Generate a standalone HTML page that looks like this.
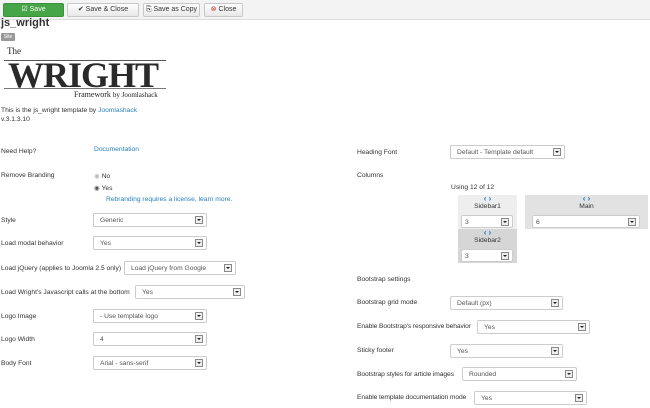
<!DOCTYPE html>
<html><head><style>
*{margin:0;padding:0;box-sizing:border-box}
body{width:650px;height:408px;background:#fff;font-family:"Liberation Sans",sans-serif;font-size:6.7px;color:#333;position:relative;overflow:hidden}
.a{position:absolute;white-space:nowrap}
.tb{position:absolute;left:0;top:0;width:650px;height:20px;background:#f3f3f3;border-bottom:1px solid #ddd}
.btn{position:absolute;top:3px;height:14px;border:1px solid #c8c8c8;border-radius:2px;background:linear-gradient(#fff,#e8e8e8);font-size:7px;line-height:12px;text-align:center;color:#333}
.sel{position:absolute;height:14px;border:1px solid #ccc;background:#fff;font-size:6.7px;line-height:13px;padding-left:6px;color:#555;border-radius:2px}
.sel i{position:absolute;right:3px;top:2px;width:8px;height:8px;border:1px solid #888;background:#eee}
.sel i:after{content:"";position:absolute;left:1px;top:2px;border-left:2px solid transparent;border-right:2px solid transparent;border-top:2px solid #222}
.lk{color:#2a7fc0}
.box{position:absolute;background:#eee}
.arr{color:#1e6fc4;font-weight:bold;font-size:8px;text-align:center;line-height:8px}
</style></head><body>
<div class="tb"></div>
<div class="btn" style="left:3px;width:61px;background:#46a546;border-color:#3d8f3d;color:#fff">☑ Save</div>
<div class="btn" style="left:67px;width:72px">✔ Save &amp; Close</div>
<div class="btn" style="left:143px;width:57px">⎘ Save as Copy</div>
<div class="btn" style="left:204px;width:39px"><span style="color:#c33">⊗</span> Close</div>
<div class="a" style="left:1px;top:17px;font-size:11px;font-weight:bold;color:#333">js_wright</div>
<div class="a" style="left:1px;top:33px;width:14px;height:8px;background:#999;color:#fff;font-size:5px;line-height:8px;text-align:center;border-radius:1px">Site</div>
<div class="a" style="left:7px;top:46px;font-family:'Liberation Serif',serif;font-size:9px;color:#222">The</div>
<div class="a" style="left:4px;top:60px;width:162px;border-top:1px solid #555"></div>
<div class="a" style="left:8px;top:59px;font-family:'Liberation Serif',serif;font-weight:bold;font-size:36px;line-height:32px;letter-spacing:-1px;color:#2a2a2a">WRIGHT</div>
<div class="a" style="left:4px;top:88px;width:162px;border-top:1px solid #777"></div>
<div class="a" style="left:74px;top:90px;font-family:'Liberation Serif',serif;font-size:8px;color:#222">Framework <span style="font-size:7px">by Joomlashack</span></div>
<div class="a" style="left:1px;top:107px">This is the js_wright template by <span class="lk">Joomlashack</span></div>
<div class="a" style="left:1px;top:116px">v.3.1.3.10</div>

<div class="a" style="left:1px;top:148px">Need Help?</div>
<div class="a lk" style="left:94px;top:146px">Documentation</div>
<div class="a" style="left:1px;top:172px">Remove Branding</div>
<div class="a" style="left:94px;top:172px"><span style="color:#bbb">◉</span> No</div>
<div class="a" style="left:94px;top:184px"><span style="color:#555">◉</span> Yes</div>
<div class="a lk" style="left:106px;top:196px">Rebranding requires a license, learn more.</div>
<div class="a" style="left:1px;top:217px">Style</div>
<div class="sel" style="left:93px;top:213px;width:114px">Generic<i></i></div>
<div class="a" style="left:1px;top:240px">Load modal behavior</div>
<div class="sel" style="left:93px;top:236px;width:114px">Yes<i></i></div>
<div class="a" style="left:1px;top:265px">Load jQuery (applies to Joomla 2.5 only)</div>
<div class="sel" style="left:124px;top:261px;width:112px">Load jQuery from Google<i></i></div>
<div class="a" style="left:1px;top:289px">Load Wright's Javascript calls at the bottom</div>
<div class="sel" style="left:135px;top:285px;width:110px">Yes<i></i></div>
<div class="a" style="left:1px;top:313px">Logo Image</div>
<div class="sel" style="left:93px;top:309px;width:114px">- Use template logo<i></i></div>
<div class="a" style="left:1px;top:336px">Logo Width</div>
<div class="sel" style="left:93px;top:332px;width:114px">4<i></i></div>
<div class="a" style="left:1px;top:360px">Body Font</div>
<div class="sel" style="left:93px;top:356px;width:114px">Arial - sans-serif<i></i></div>

<div class="a" style="left:357px;top:149px">Heading Font</div>
<div class="sel" style="left:450px;top:145px;width:115px">Default - Template default<i></i></div>
<div class="a" style="left:357px;top:172px">Columns</div>
<div class="a" style="left:451px;top:184px">Using 12 of 12</div>
<div class="box" style="left:458px;top:195px;width:59px;height:34px"><div class="arr">‹ ›</div><div style="text-align:center">Sidebar1</div></div>
<div class="sel" style="left:461px;top:215px;width:52px;height:13px;padding-left:3px">3<i></i></div>
<div class="box" style="left:525px;top:195px;width:123px;height:34px;background:#e2e2e2"><div class="arr">‹ ›</div><div style="text-align:center">Main</div></div>
<div class="sel" style="left:532px;top:215px;width:108px;height:13px;padding-left:3px">6<i></i></div>
<div class="box" style="left:458px;top:229px;width:59px;height:34px;background:#d6d6d6"><div class="arr">‹ ›</div><div style="text-align:center">Sidebar2</div></div>
<div class="sel" style="left:461px;top:249px;width:52px;height:13px;padding-left:3px">3<i></i></div>
<div class="a" style="left:357px;top:276px">Bootstrap settings</div>
<div class="a" style="left:357px;top:299px">Bootstrap grid mode</div>
<div class="sel" style="left:450px;top:296px;width:113px">Default (px)<i></i></div>
<div class="a" style="left:357px;top:323px;letter-spacing:-0.1px">Enable Bootstrap's responsive behavior</div>
<div class="sel" style="left:477px;top:320px;width:113px">Yes<i></i></div>
<div class="a" style="left:357px;top:347px">Sticky footer</div>
<div class="sel" style="left:450px;top:344px;width:113px">Yes<i></i></div>
<div class="a" style="left:357px;top:371px;letter-spacing:-0.1px">Bootstrap styles for article images</div>
<div class="sel" style="left:462px;top:367px;width:115px">Rounded<i></i></div>
<div class="a" style="left:357px;top:394px;letter-spacing:-0.1px">Enable template documentation mode</div>
<div class="sel" style="left:474px;top:391px;width:113px">Yes<i></i></div>
</body></html>
